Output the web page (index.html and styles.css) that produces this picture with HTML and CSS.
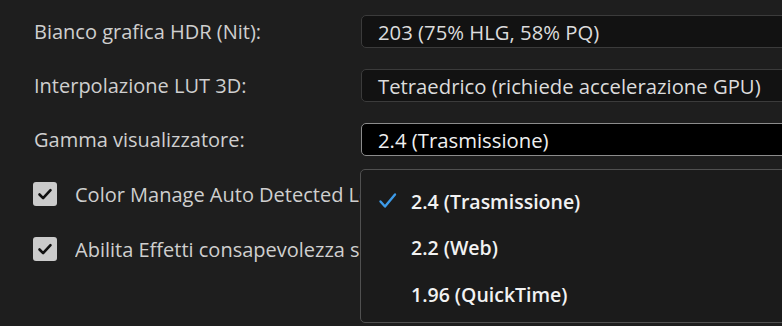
FILE: index.html
```html
<!DOCTYPE html>
<html lang="it">
<head>
<meta charset="utf-8">
<link rel="stylesheet" href="styles.css">
</head>
<body>
<div class="panel">
  <div class="row">
    <div class="label">Bianco grafica HDR (Nit):</div>
    <div class="field">203 (75% HLG, 58% PQ)</div>
  </div>
  <div class="row">
    <div class="label">Interpolazione LUT 3D:</div>
    <div class="field">Tetraedrico (richiede accelerazione GPU)</div>
  </div>
  <div class="row">
    <div class="label">Gamma visualizzatore:</div>
    <div class="field focus">2.4 (Trasmissione)</div>
  </div>
  <div class="check-row first">
    <span class="box"><svg viewBox="0 0 24 24" width="24" height="24"><path d="M6.5 12.5l3.6 3.6 7.4-8" fill="none" stroke="#111" stroke-width="2.6" stroke-linecap="round" stroke-linejoin="round"/></svg></span>
    <span class="check-label">Color Manage Auto Detected Log Video Media</span>
  </div>
  <div class="check-row">
    <span class="box"><svg viewBox="0 0 24 24" width="24" height="24"><path d="M6.5 12.5l3.6 3.6 7.4-8" fill="none" stroke="#111" stroke-width="2.6" stroke-linecap="round" stroke-linejoin="round"/></svg></span>
    <span class="check-label">Abilita Effetti consapevolezza spazio colore</span>
  </div>
</div>
<div class="menu">
  <div class="item"><span class="tick"><svg viewBox="0 0 20 20" width="20" height="20"><path d="M2.5 10.5l4.5 5 10-12" fill="none" stroke="#3d9be9" stroke-width="2.4" stroke-linecap="round" stroke-linejoin="round"/></svg></span><span>2.4 (Trasmissione)</span></div>
  <div class="item"><span class="tick"></span><span>2.2 (Web)</span></div>
  <div class="item"><span class="tick"></span><span>1.96 (QuickTime)</span></div>
</div>
</body>
</html>
```
FILE: styles.css
```css
html, body {
  margin: 0;
  padding: 0;
  width: 782px;
  height: 326px;
  overflow: hidden;
  background: #1e1e1e;
  font-family: "Open Sans", "Noto Sans", sans-serif;
  color: #c9c9c9;
}
.panel {
  width: 782px;
  overflow: hidden;
  padding: 15px 0 0 34px;
  box-sizing: border-box;
  display: flex;
  flex-direction: column;
}
.row {
  display: flex;
  align-items: center;
  height: 33px;
  margin-bottom: 21px;
}
.label {
  width: 327px;
  flex: none;
  font-size: 20px;
  color: #cfcfcf;
}
.field {
  flex: none;
  width: 460px;
  height: 31px;
  box-sizing: content-box;
  border: 1px solid #3b3b3b;
  border-radius: 5px;
  background: #121212;
  padding-left: 16px;
  display: flex;
  align-items: center;
  font-size: 20.3px;
  color: #dcdcdc;
  white-space: nowrap;
}
.field.focus {
  background: #000;
  border-color: #8c8c8c;
  color: #f0f0f0;
}
.check-row {
  display: flex;
  align-items: center;
  height: 24px;
  margin-bottom: 31px;
}
.check-row.first {
  margin-top: 5px;
}
.box {
  width: 24px;
  height: 24px;
  border-radius: 3px;
  background: #cbcbcb;
  display: flex;
  flex: none;
  margin-left: -1px;
}
.check-label {
  margin-left: 18px;
  width: 287px;
  overflow: hidden;
  font-size: 20px;
  color: #cfcfcf;
  white-space: nowrap;
}
.menu {
  position: absolute;
  left: 360px;
  top: 169px;
  width: 440px;
  height: 154px;
  border: 1px solid #505050;
  border-radius: 5px;
  background: #1b1b1b;
  padding-top: 8px;
  box-sizing: border-box;
}
.item {
  display: flex;
  align-items: center;
  height: 46.5px;
  font-size: 19.5px;
  color: #f2f2f2;
  font-weight: 600;
}
.tick {
  width: 20px;
  height: 20px;
  margin-left: 17px;
  margin-right: 13px;
  display: flex;
}
```
